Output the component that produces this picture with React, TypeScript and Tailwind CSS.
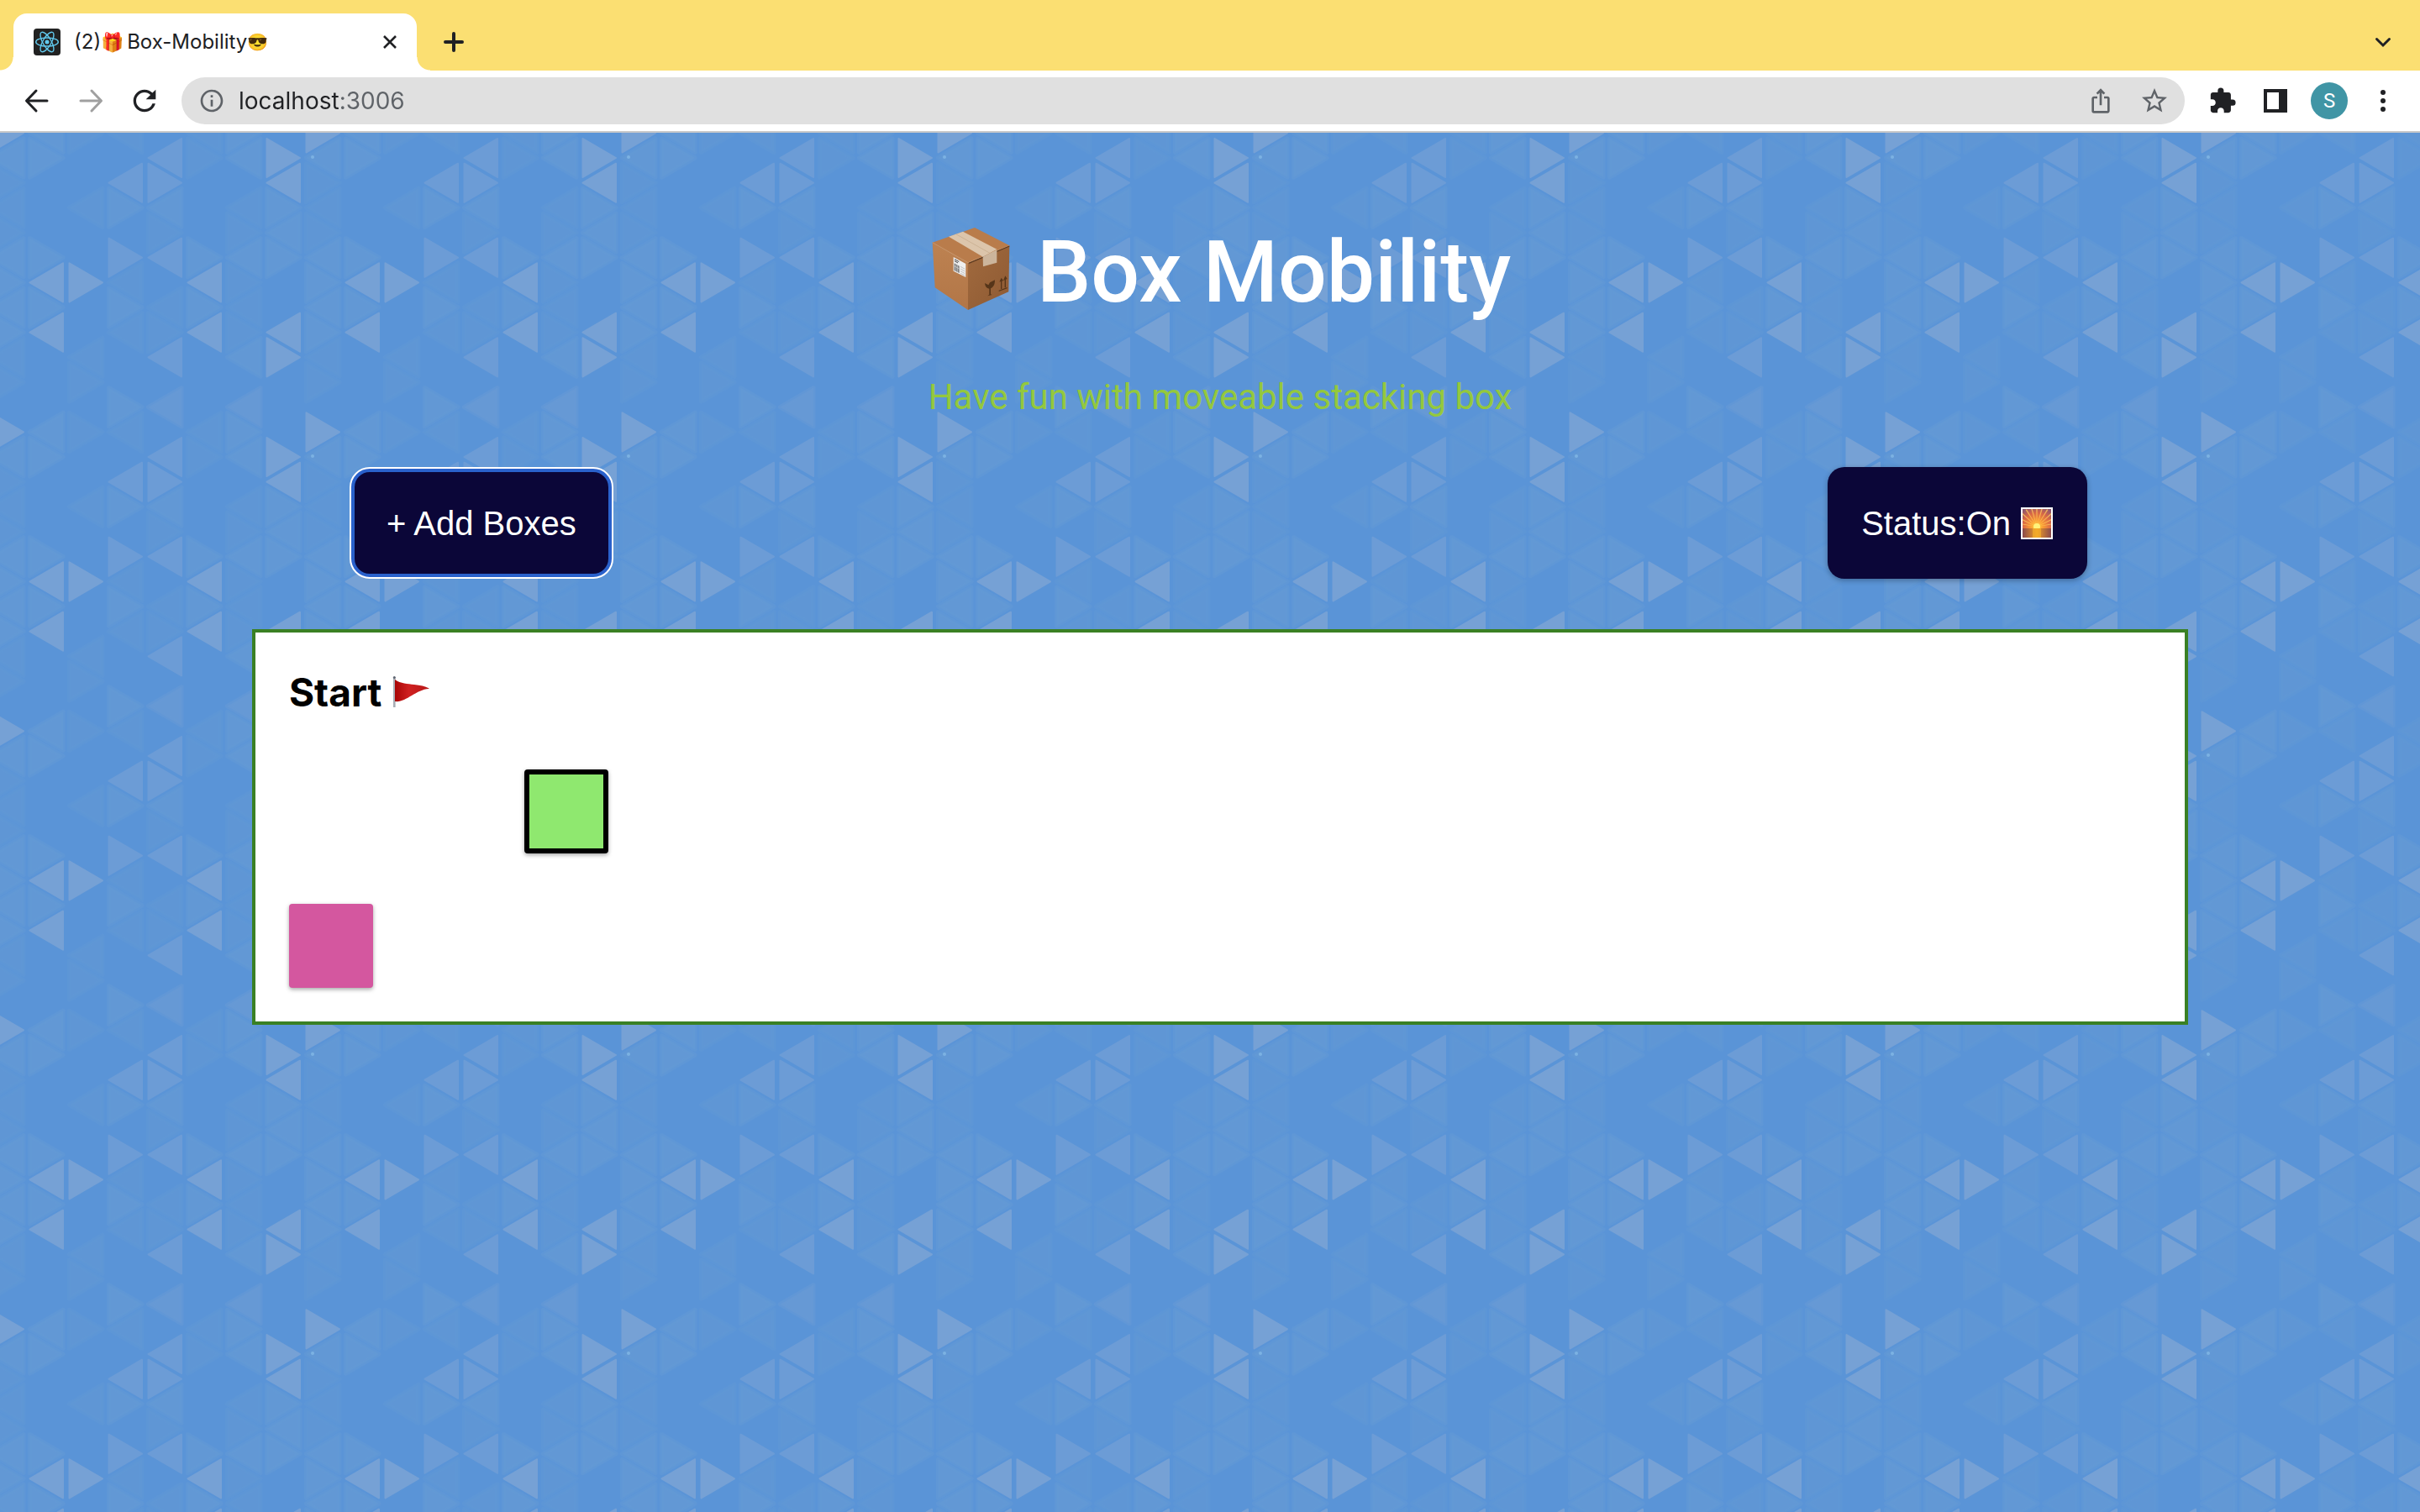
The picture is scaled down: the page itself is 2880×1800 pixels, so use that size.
import React from 'react';
import { MdRefresh, MdInfoOutline, MdIosShare, MdStarBorder, MdExtension } from 'react-icons/md';

const SHADES = ['#5a94d7', '#5f96d5', '#6298d5', '#6699d5', '#6c9cd6', '#76a1d5'];

// One string per column; each digit is the shade of a triangle, top to bottom.
const COLUMNS = [
  '252500022000',
  '050011010010',
  '412100210420',
  '401140304421',
  '252500011000',
  '211120322011',
  '200550005522',
  '222211052111',
];

const COL_W = 47;
const ROW_H = 356 / 12;

function Triangle({ c, cy, right, shade }: { c: number; cy: number; right: boolean; shade: number }) {
  const a = c * COL_W + 3.5;
  const b = c * COL_W + 43;
  const points = right
    ? `${a},${cy - 23} ${b},${cy} ${a},${cy + 23}`
    : `${b},${cy - 23} ${a},${cy} ${b},${cy + 23}`;
  const soft = shade < 4;
  return (
    <polygon
      points={points}
      fill={SHADES[shade]}
      stroke={SHADES[shade]}
      strokeWidth={soft ? 5 : 2}
      strokeOpacity={soft ? 0.55 : 1}
      strokeLinejoin="round"
    />
  );
}

function TriangleBackdrop() {
  return (
    <svg className="absolute inset-0 h-full w-full" aria-hidden="true">
      <defs>
        <pattern id="triangles" x="32" y="119" width="376" height="356" patternUnits="userSpaceOnUse">
          <rect width="376" height="356" fill={SHADES[0]} />
          {COLUMNS.map((col, c) =>
            col.split('').map((d, j) => {
              if (d === '0') return null;
              const cy = ROW_H * (j + 1);
              const right = (c + j) % 2 === 0;
              return (
                <g key={`${c}-${j}`}>
                  <Triangle c={c} cy={cy} right={right} shade={Number(d)} />
                  {j === 11 && <Triangle c={c} cy={cy - 356} right={right} shade={Number(d)} />}
                </g>
              );
            }),
          )}
          <circle cx="340" cy="266" r="2" fill="#82b9e6" opacity="0.8" />
        </pattern>
      </defs>
      <rect width="100%" height="100%" fill="url(#triangles)" />
    </svg>
  );
}

function ReactLogo() {
  return (
    <svg viewBox="0 0 32 32" className="size-8 shrink-0" aria-hidden="true">
      <rect width="32" height="32" rx="4" fill="#222" />
      <g fill="none" stroke="#61c9ee" strokeWidth="1.4">
        <ellipse cx="16" cy="16" rx="13.3" ry="5" />
        <ellipse cx="16" cy="16" rx="13.3" ry="5" transform="rotate(60 16 16)" />
        <ellipse cx="16" cy="16" rx="13.3" ry="5" transform="rotate(120 16 16)" />
      </g>
      <circle cx="16" cy="16" r="2.5" fill="#61c9ee" />
    </svg>
  );
}

function PackageIcon() {
  return (
    <svg viewBox="-2 12 360 360" className="size-[120px] shrink-0" role="img" aria-label="Package">
      <defs>
        <linearGradient id="pkgLeft" x1="0" y1="0" x2="0" y2="1">
          <stop offset="0" stopColor="#bd8251" />
          <stop offset="1" stopColor="#b27647" />
        </linearGradient>
        <linearGradient id="pkgRight" x1="0" y1="0" x2="1" y2="1">
          <stop offset="0" stopColor="#a16a3e" />
          <stop offset="1" stopColor="#8e5a33" />
        </linearGradient>
      </defs>
      <path d="M33 86 L160 158 L160 327 L42 247 Z" fill="url(#pkgLeft)" />
      <path d="M160 158 L308 97 L305 262 L160 327 Z" fill="url(#pkgRight)" />
      <path d="M33 86 L184 33 L308 97 L160 158 Z" fill="#b97c4b" />
      <path d="M33 86 L160 158 L308 97" fill="none" stroke="#cc9566" strokeWidth="3" />
      <path d="M163 160 L308 99" stroke="#5d3a20" strokeWidth="4" />
      <path d="M91 65 L142 47 L263 110 L213 137 Z" fill="#dcc5ab" />
      <path d="M213 137 L263 112 L263 158 L214 172 Z" fill="#ccb59c" />
      <path d="M117 56 L238 124" stroke="#c4a989" strokeWidth="2" />
      <path d="M108 138 L152 162 L152 210 L108 188 Z" fill="#efefef" />
      <path d="M112 146 L128 155 M112 152 L124 159" stroke="#444" strokeWidth="3" />
      <path d="M111 160 L129 170 L129 195 L111 186 Z" fill="#777" />
      <path d="M117 163 V190 M123 166 V193 M111 170 L129 180" stroke="#ddd" strokeWidth="2" />
      <path d="M133 172 L149 181 M133 180 L149 189 M133 188 L149 197 M133 196 L149 204" stroke="#aaa" strokeWidth="2" />
      <g fill="#563519">
        <path d="M220 231 L233 238 L238 229 L256 220 C256 238 250 246 241 250 L241 271 L246 273 L230 277 L236 272 L236 251 C226 250 221 243 220 231 Z" />
        <path d="M279 212 L286 222 L281 224 V252 H277 V225 L272 227 Z" />
        <path d="M293 205 L300 216 L295 218 V247 H291 V220 L286 222 Z" />
        <path d="M270 257 L300 246 V250 L270 261 Z" />
      </g>
    </svg>
  );
}

function SunriseIcon() {
  const rays = [-80, -64, -48, -32, -16, 0, 16, 32, 48, 64, 80];
  return (
    <svg viewBox="0 0 40 40" className="ml-[11px] size-10 shrink-0" role="img" aria-label="Sunrise">
      <defs>
        <radialGradient id="sky" cx="0.5" cy="0.62" r="0.75">
          <stop offset="0" stopColor="#ffd83a" />
          <stop offset="0.3" stopColor="#f99b35" />
          <stop offset="0.65" stopColor="#d96845" />
          <stop offset="1" stopColor="#8b5570" />
        </radialGradient>
        <linearGradient id="sea" x1="0" x2="1">
          <stop offset="0" stopColor="#8a4a4c" />
          <stop offset="0.5" stopColor="#ee9c26" />
          <stop offset="1" stopColor="#8a4a4c" />
        </linearGradient>
        <clipPath id="frame">
          <rect x="3" y="3" width="34" height="34" />
        </clipPath>
      </defs>
      <rect x="1" y="1" width="38" height="38" fill="#fff" />
      <g clipPath="url(#frame)">
        <rect x="3" y="3" width="34" height="34" fill="url(#sky)" />
        {rays.map((r) => (
          <path key={r} d="M20 24 L19.2 0 L20.8 0 Z" fill="#ffc95c" opacity="0.8" transform={`rotate(${r} 20 24)`} />
        ))}
        <circle cx="20" cy="24" r="4" fill="#fff27a" />
        <rect x="3" y="26" width="34" height="11" fill="url(#sea)" />
        <rect x="15" y="26" width="10" height="11" fill="#f9b52c" opacity="0.6" />
      </g>
    </svg>
  );
}

function FlagIcon() {
  return (
    <svg viewBox="0 0 46 40" className="ml-3 h-10 w-[46px] shrink-0" role="img" aria-label="Flag">
      <defs>
        <linearGradient id="flagRed" x1="0" y1="0" x2="1" y2="0">
          <stop offset="0" stopColor="#a80505" />
          <stop offset="0.4" stopColor="#cf2020" />
          <stop offset="1" stopColor="#b81818" />
        </linearGradient>
      </defs>
      <rect x="2" y="2" width="2.6" height="36" fill="#a7adb5" />
      <circle cx="3.3" cy="2.5" r="1.5" fill="#5f6672" />
      <path d="M4 5 C11 10 19 10 27 11 C35 12 41 13 45 16 C38 16 31 20 24 24 C17 28 11 32 4 31 Z" fill="url(#flagRed)" />
    </svg>
  );
}

function ArrowIcon({ forward = false }: { forward?: boolean }) {
  return (
    <svg viewBox="0 0 40 40" className="size-10" fill="none" stroke="currentColor" strokeWidth="3" strokeLinecap="round" strokeLinejoin="round">
      <path d={forward ? 'M8 20 H32 M21 8 L32.500 20 L21 32' : 'M32 20 H8 M19 8 L7.500 20 L19 32'} />
    </svg>
  );
}

function TabStrip() {
  return (
    <div className="flex h-[84px] items-end bg-[#fbdf72]">
      <div className="size-4 bg-[radial-gradient(circle_at_0_0,#fbdf72_15px,#fff_16px)]" />
      <div className="flex h-[68px] w-[480px] items-center rounded-t-2xl bg-white pr-[18px] pl-6 font-['Inter',sans-serif] text-[24px] text-[#202124]">
        <ReactLogo />
        <div className="ml-4 flex flex-1 items-center whitespace-pre">
          <span>(2)</span>
          <span className="text-[22px]">🎁</span>
          <span className="ml-1">Box-Mobility</span>
          <span className="text-[20px]">😎</span>
        </div>
        <button type="button" aria-label="Close tab" className="flex size-7 items-center justify-center">
          <svg viewBox="0 0 16 16" className="size-4" fill="none" stroke="#202124" strokeWidth="2.6">
            <path d="M1 1 L15 15 M15 1 L1 15" />
          </svg>
        </button>
      </div>
      <div className="size-4 bg-[radial-gradient(circle_at_100%_0,#fbdf72_15px,#fff_16px)]" />
      <button type="button" aria-label="New tab" className="ml-4 flex h-[68px] w-6 items-center justify-center">
        <svg viewBox="0 0 24 24" className="size-6" fill="none" stroke="#202124" strokeWidth="4" strokeLinecap="round">
          <path d="M12 2 V22 M2 12 H22" />
        </svg>
      </button>
      <button type="button" aria-label="Search tabs" className="mr-8 ml-auto flex h-[68px] w-6 items-center justify-center">
        <svg viewBox="0 0 24 24" className="size-6" fill="none" stroke="#202124" strokeWidth="3" strokeLinecap="round">
          <path d="M4.500 8.500 L12 16 L19.500 8.500" />
        </svg>
      </button>
    </div>
  );
}

function Toolbar() {
  return (
    <div className="flex h-[74px] items-center border-b-2 border-[#c9c9c9] bg-white pr-8 pl-6 text-[#202124]">
      <div className="flex gap-6">
        <button type="button" aria-label="Back">
          <ArrowIcon />
        </button>
        <button type="button" aria-label="Forward" className="text-[#a0a0a0]">
          <ArrowIcon forward />
        </button>
        <button type="button" aria-label="Reload">
          <MdRefresh size={40} />
        </button>
      </div>
      <div className="ml-6 flex h-14 flex-1 items-center rounded-full bg-[#e0e0e0] pr-[18px] pl-5 text-[#5f6368]">
        <MdInfoOutline size={32} />
        <input
          type="text"
          aria-label="Address"
          defaultValue="localhost:3006"
          className="ml-4 min-w-0 flex-1 bg-[linear-gradient(90deg,#202124_121px,#5f6368_121px)] bg-clip-text font-['Inter',sans-serif] text-[28px] text-transparent outline-none"
        />
        <button type="button" aria-label="Share">
          <MdIosShare size={32} />
        </button>
        <button type="button" aria-label="Bookmark" className="ml-[30px]">
          <MdStarBorder size={36} />
        </button>
      </div>
      <button type="button" aria-label="Extensions" className="ml-7">
        <MdExtension size={34} />
      </button>
      <button type="button" aria-label="Side panel" className="ml-8">
        <svg viewBox="0 0 28 28" className="size-7">
          <path fill="#202124" fillRule="evenodd" d="M0 0 H28 V28 H0 Z M4 4 V24 H18 V4 Z" />
        </svg>
      </button>
      <button
        type="button"
        aria-label="Profile"
        className="ml-7 flex size-11 items-center justify-center rounded-full bg-[#4095a5] font-['Roboto',sans-serif] text-[24px] text-white"
      >
        S
      </button>
      <button type="button" aria-label="Menu" className="ml-[30px] flex h-10 w-6 items-center justify-center">
        <svg viewBox="0 0 8 28" className="h-7 w-2" fill="#202124">
          <circle cx="4" cy="4" r="3" />
          <circle cx="4" cy="14" r="3" />
          <circle cx="4" cy="24" r="3" />
        </svg>
      </button>
    </div>
  );
}

export default function App() {
  return (
    <div className="flex min-h-screen flex-col bg-[#5a94d7]">
      <header>
        <TabStrip />
        <Toolbar />
      </header>
      <main className="relative flex-1">
        <TriangleBackdrop />
        <div className="relative flex flex-col items-center pt-[106px] pb-10 pl-6">
          <h1 className="flex items-center gap-4 pr-2 font-['Roboto',sans-serif] text-[102px] leading-[120px] font-medium text-white">
            <PackageIcon />
            Box Mobility
          </h1>
          <p className="mt-16 font-['Roboto',sans-serif] text-[42px] leading-[50px] text-[#94c83d]">
            Have fun with moveable stacking box
          </p>
          <div className="mt-[58px] flex w-[80vw] justify-between pr-[120px] pl-[116px] font-['Liberation_Sans',Arial,sans-serif] text-[40px] text-white">
            <button type="button" className="rounded-[24px] border-2 border-white bg-white">
              <span className="flex h-[129px] items-center rounded-[22px] border-4 border-[#2a61cb] bg-[#0b0638] px-[38px]">
                + Add Boxes
              </span>
            </button>
            <button
              type="button"
              className="flex h-[133px] items-center rounded-[20px] bg-[#0b0638] px-10 shadow-[0_2px_6px_rgba(0,0,0,0.3)]"
            >
              Status:On
              <SunriseIcon />
            </button>
          </div>
          <section className="mt-[60px] w-[80vw] border-4 border-[#3a8024] bg-white p-10">
            <h2 className="flex items-center font-['Inter',sans-serif] text-[46px] leading-[62px] font-bold text-black">
              Start
              <FlagIcon />
            </h2>
            <div className="mt-[61px] flex flex-col gap-[60px]">
              <div className="ml-[280px] size-[100px] rounded-[4px] border-[6px] border-black bg-[#8fe86f] shadow-[0_2px_5px_rgba(0,0,0,0.35)]" />
              <div className="size-[100px] rounded-[4px] bg-[#d4579f] shadow-[0_2px_5px_rgba(0,0,0,0.35)]" />
            </div>
          </section>
        </div>
      </main>
    </div>
  );
}
